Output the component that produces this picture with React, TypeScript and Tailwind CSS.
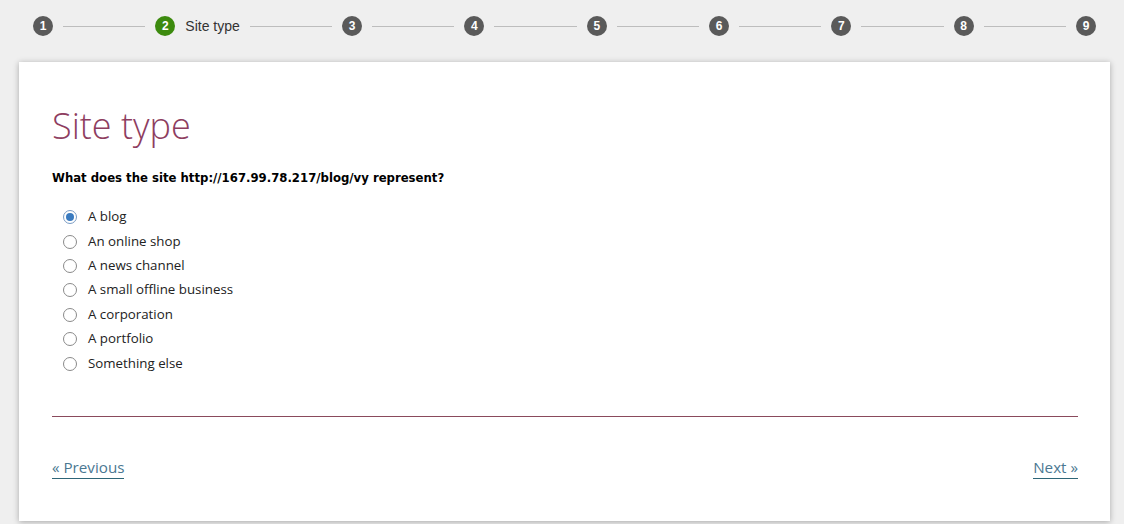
import React from "react";

const options = [
  "A blog",
  "An online shop",
  "A news channel",
  "A small offline business",
  "A corporation",
  "A portfolio",
  "Something else",
];

function Step({ n, active, label }: { n: number; active?: boolean; label?: string }) {
  return (
    <div className="flex items-center">
      <div
        className={`flex h-5 w-5 items-center justify-center rounded-full text-[12px] font-bold text-white ${
          active ? "bg-[#3c8a0e]" : "bg-[#5a5a5a]"
        }`}
      >
        {n}
      </div>
      {label && <span className="ml-2.5 text-[14px] text-[#333]">{label}</span>}
    </div>
  );
}

export default function App() {
  const steps = [1, 2, 3, 4, 5, 6, 7, 8, 9];
  return (
    <div className="min-h-[524px] w-[1124px] bg-[#efefef] pb-1" style={{ fontFamily: '"Liberation Sans", Arial, sans-serif' }}>
      <div className="flex h-[52px] items-center pl-[33px] pr-7 pt-0">
        {steps.map((n, i) => (
          <React.Fragment key={n}>
            <Step n={n} active={n === 2} label={n === 2 ? "Site type" : undefined} />
            {i < steps.length - 1 && <div className="mx-2.5 h-px flex-1 bg-[#bdbdbd]" />}
          </React.Fragment>
        ))}
      </div>
      <div
        className="ml-[19px] mt-[10px] w-[1091px] bg-white pb-[42px] pl-[33px] pr-[32px] pt-[40px] shadow-[0_1px_6px_rgba(0,0,0,0.3)]"
        style={{ fontFamily: '"Open Sans", "Noto Sans", sans-serif' }}
      >
        <h1 className="text-[36px] font-light leading-[48px] text-[#8e3d5f]">Site type</h1>
        <p
          className="mt-[19px] text-[11.7px] font-bold leading-[18px] text-black"
          style={{ fontFamily: '"DejaVu Sans", Tahoma, sans-serif' }}
        >
          What does the site http://167.99.78.217/blog/vy represent?
        </p>
        <div className="mt-[18px] flex flex-col">
          {options.map((o, i) => (
            <label key={o} className="flex h-[24.4px] items-center">
              <span
                className={`ml-[11px] flex h-[14px] w-[14px] items-center justify-center rounded-full border bg-white ${
                  i === 0 ? "border-[#7a9cc4]" : "border-[#8a8a8a]"
                }`}
              >
                {i === 0 && <span className="h-[8px] w-[8px] rounded-full bg-[#3a7bc0]" />}
              </span>
              <span className="ml-[11px] text-[13.3px] text-[#222]">{o}</span>
            </label>
          ))}
        </div>
        <div className="mt-[40px] h-px bg-[#8a4a5c]" />
        <div className="mt-[39px] flex items-center justify-between text-[15.2px] leading-[22px] text-[#4b7892]">
          <a className="border-b border-[#2e6577]">« Previous</a>
          <a className="border-b border-[#2e6577]">Next »</a>
        </div>
      </div>
    </div>
  );
}
